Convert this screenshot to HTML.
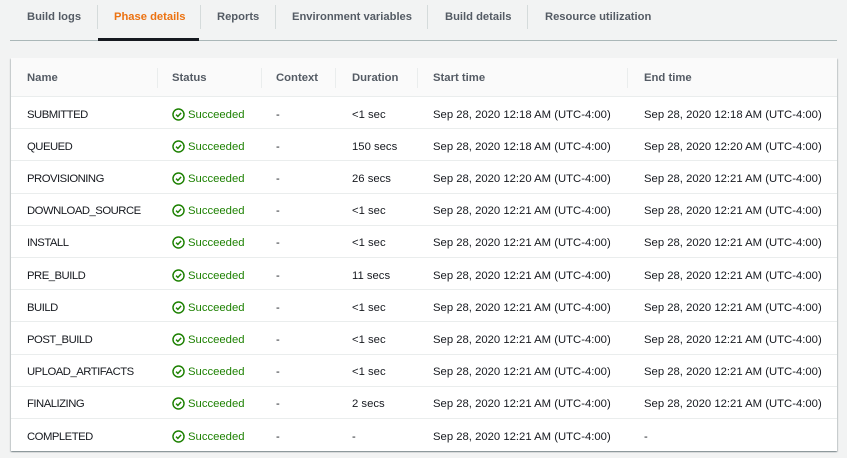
<!DOCTYPE html>
<html><head><meta charset="utf-8"><style>
*{margin:0;padding:0;box-sizing:border-box}
body{width:847px;height:458px;background:#f2f3f3;font-family:"Liberation Sans",Arial,sans-serif;position:relative;overflow:hidden;color:#16191f}
.tab{position:absolute;top:11px;font-size:11.2px;font-weight:bold;color:#545b64;white-space:nowrap}
.sep{position:absolute;top:5px;width:1px;height:24px;background:#d5dbdb}
.card{position:absolute;left:11px;top:58px;width:826px;height:393px;background:#fff;box-shadow:0 1px 1px rgba(0,28,36,.3),1px 1px 1px rgba(0,28,36,.15),-1px 1px 1px rgba(0,28,36,.15)}
.hdr{position:absolute;left:0;top:0;width:826px;height:39px;background:#fafafa;border-bottom:1px solid #eaeded}
.h{position:absolute;top:14px;font-size:11.3px;font-weight:bold;color:#545b64}
.hs{position:absolute;top:10px;width:1px;height:20px;background:#eaeded}
.row{position:absolute;left:0;width:826px;height:32.2px;border-bottom:1px solid #eaeded;font-size:11.3px}
.row span{position:absolute;top:11.5px;white-space:nowrap}
.row span.n{letter-spacing:-0.5px}
.ok{color:#1d8102}
.ok svg{position:absolute;left:-16px;top:-1px}
</style></head><body>
<div class="tab" style="left:27px">Build logs</div>
<div class="sep" style="left:97px"></div>
<div class="tab" style="left:114px;color:#ec7211">Phase details</div>
<div class="sep" style="left:200px"></div>
<div class="tab" style="left:217px">Reports</div>
<div class="sep" style="left:275px"></div>
<div class="tab" style="left:292px">Environment variables</div>
<div class="sep" style="left:427px"></div>
<div class="tab" style="left:445px">Build details</div>
<div class="sep" style="left:527px"></div>
<div class="tab" style="left:545px">Resource utilization</div>
<div style="position:absolute;left:10px;top:40px;width:827px;height:1px;background:#aab7b8"></div>
<div style="position:absolute;left:98px;top:38px;width:101px;height:3px;background:#16191f"></div>
<div class="card">
<div class="hdr">
<div class="h" style="left:16px">Name</div>
<div class="hs" style="left:146px"></div>
<div class="h" style="left:161px">Status</div>
<div class="hs" style="left:250px"></div>
<div class="h" style="left:265px">Context</div>
<div class="hs" style="left:324px"></div>
<div class="h" style="left:341px">Duration</div>
<div class="hs" style="left:406px"></div>
<div class="h" style="left:422px">Start time</div>
<div class="hs" style="left:616px"></div>
<div class="h" style="left:633px">End time</div>
</div>
<div id="rows"></div>
</div>
<script>
var d=[["SUBMITTED","-","&lt;1 sec","Sep 28, 2020 12:18 AM (UTC-4:00)","Sep 28, 2020 12:18 AM (UTC-4:00)"],
["QUEUED","-","150 secs","Sep 28, 2020 12:18 AM (UTC-4:00)","Sep 28, 2020 12:20 AM (UTC-4:00)"],
["PROVISIONING","-","26 secs","Sep 28, 2020 12:20 AM (UTC-4:00)","Sep 28, 2020 12:21 AM (UTC-4:00)"],
["DOWNLOAD_SOURCE","-","&lt;1 sec","Sep 28, 2020 12:21 AM (UTC-4:00)","Sep 28, 2020 12:21 AM (UTC-4:00)"],
["INSTALL","-","&lt;1 sec","Sep 28, 2020 12:21 AM (UTC-4:00)","Sep 28, 2020 12:21 AM (UTC-4:00)"],
["PRE_BUILD","-","11 secs","Sep 28, 2020 12:21 AM (UTC-4:00)","Sep 28, 2020 12:21 AM (UTC-4:00)"],
["BUILD","-","&lt;1 sec","Sep 28, 2020 12:21 AM (UTC-4:00)","Sep 28, 2020 12:21 AM (UTC-4:00)"],
["POST_BUILD","-","&lt;1 sec","Sep 28, 2020 12:21 AM (UTC-4:00)","Sep 28, 2020 12:21 AM (UTC-4:00)"],
["UPLOAD_ARTIFACTS","-","&lt;1 sec","Sep 28, 2020 12:21 AM (UTC-4:00)","Sep 28, 2020 12:21 AM (UTC-4:00)"],
["FINALIZING","-","2 secs","Sep 28, 2020 12:21 AM (UTC-4:00)","Sep 28, 2020 12:21 AM (UTC-4:00)"],
["COMPLETED","-","-","Sep 28, 2020 12:21 AM (UTC-4:00)","-"]];
var ic='<svg width="13" height="13" viewBox="0 0 16 16"><circle cx="8" cy="8" r="6.8" fill="none" stroke="#1d8102" stroke-width="1.8"/><path d="M5 8.2l2.2 2.2L11.2 6" fill="none" stroke="#1d8102" stroke-width="1.8"/></svg>';
var h='';
d.forEach(function(r,i){
h+='<div class="row" style="top:'+(39+i*32.2)+'px'+(i==10?';border-bottom:none':'')+'"><span class="n" style="left:16px">'+r[0]+'</span><span class="ok" style="left:177px">'+ic+'Succeeded</span><span style="left:265px">'+r[1]+'</span><span style="left:341px">'+r[2]+'</span><span style="left:422px">'+r[3]+'</span><span style="left:633px">'+r[4]+'</span></div>';});
document.getElementById('rows').innerHTML=h;
</script>
</body></html>
